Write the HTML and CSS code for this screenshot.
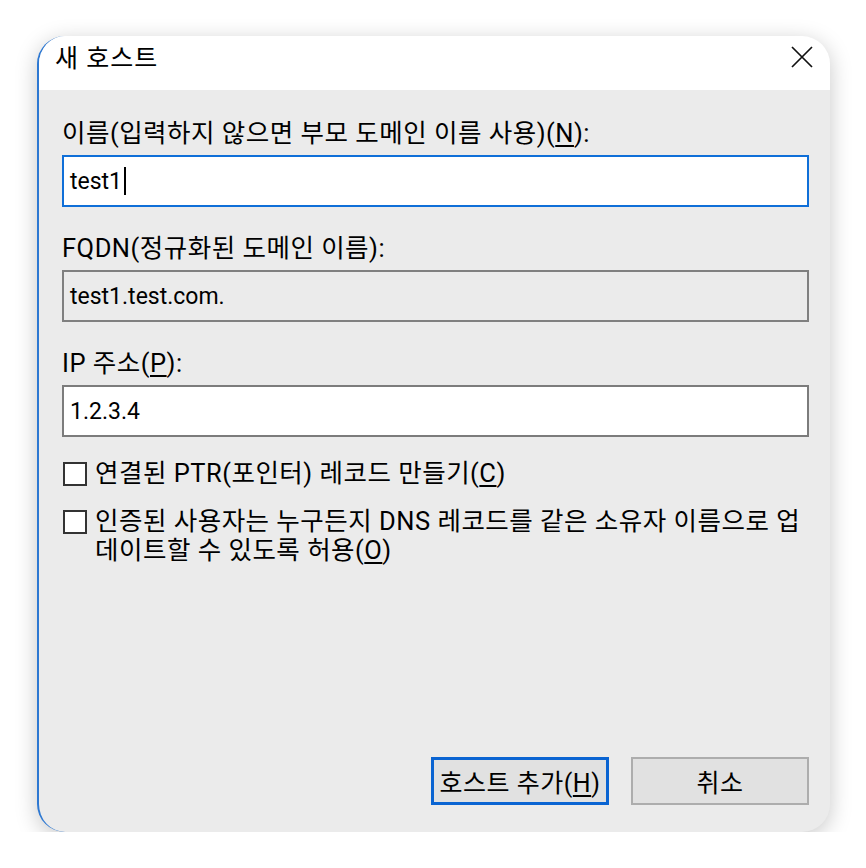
FILE: index.html
```html
<!DOCTYPE html>
<html lang="ko">

<head>
    <meta charset="UTF-8">
    <meta name="viewport" content="width=device-width, initial-scale=1.0">
    <title>새 호스트</title>
    <link rel="stylesheet" href="styles.css">
</head>

<body>

    <div class="dialog">
        <div class="titlebar">
            <span class="title">새 호스트</span>
            <button class="close" aria-label="닫기">
                <svg width="22" height="22" viewBox="0 0 22 22">
                    <path d="M1 1 L21 21 M21 1 L1 21" stroke="#111" stroke-width="1.7" fill="none" />
                </svg>
            </button>
        </div>

        <div class="content">
            <label class="label">이름(입력하지 않으면 부모 도메인 이름 사용)(<u>N</u>):</label>
            <div class="field field-focus">test1<span class="caret"></span></div>

            <label class="label">FQDN(정규화된 도메인 이름):</label>
            <div class="field field-readonly">test1.test.com.</div>

            <label class="label">IP 주소(<u>P</u>):</label>
            <div class="field">1.2.3.4</div>

            <div class="check first">
                <span class="box"></span>
                <span class="check-text">연결된 PTR(포인터) 레코드 만들기(<u>C</u>)</span>
            </div>
            <div class="check">
                <span class="box"></span>
                <span class="check-text">인증된 사용자는 누구든지 DNS 레코드를 같은 소유자 이름으로 업<br>데이트할 수 있도록 허용(<u>O</u>)</span>
            </div>

            <div class="actions">
                <button class="btn btn-default">호스트 추가(<u>H</u>)</button>
                <button class="btn">취소</button>
            </div>
        </div>
    </div>

</body>

</html>
```

FILE: styles.css
```css
body {
    margin: 0;
    background-color: #fff;
    font-family: 'Roboto', 'Noto Sans CJK KR', sans-serif;
    color: #000;
}

.dialog {
    box-sizing: border-box;
    width: 793px;
    height: 796px;
    margin: 36px 0 0 37px;
    border-left: 2px solid #2d78d2;
    border-radius: 28px;
    overflow: hidden;
    background-color: #ebebeb;
    box-shadow: 0 5px 22px rgba(0, 0, 0, 0.22);
    display: flex;
    flex-direction: column;
}

.titlebar {
    height: 54px;
    background-color: #fff;
    display: flex;
    justify-content: space-between;
    align-items: flex-start;
    padding: 0 17px 0 16px;
    box-sizing: border-box;
}

.title {
    font-size: 25px;
    line-height: 30px;
    letter-spacing: 1px;
    margin-top: 8px;
}

.close {
    border: none;
    background: none;
    padding: 0;
    margin-top: 10px;
    width: 22px;
    height: 22px;
}

.close svg {
    display: block;
}

.content {
    flex: 1;
    display: flex;
    flex-direction: column;
    padding: 28px 21px 27px 23px;
}

.label {
    font-size: 25.5px;
    line-height: 30px;
    letter-spacing: 0.5px;
    margin-bottom: 7px;
}

.label u,
.check-text u,
.btn u {
    text-underline-offset: 3px;
}

.field {
    box-sizing: border-box;
    height: 52px;
    border: 2px solid #7c7c7c;
    background-color: #fff;
    display: flex;
    align-items: center;
    padding: 0 6px;
    font-size: 23px;
    margin-bottom: 26px;
}

.field-focus {
    border-color: #0f6fd8;
}

.field-readonly {
    background-color: #ebebeb;
    border-color: #808080;
}

.caret {
    display: inline-block;
    width: 2px;
    height: 28px;
    margin-left: 2px;
    background-color: #000;
}

.check {
    display: flex;
    align-items: flex-start;
    padding-left: 1px;
}

.check.first {
    margin-top: -4px;
    margin-bottom: 19px;
}

.box {
    box-sizing: border-box;
    flex: none;
    width: 24px;
    height: 24px;
    margin-top: 3px;
    margin-right: 8px;
    border: 2px solid #333;
    background-color: #fff;
}

.check-text {
    font-size: 25.5px;
    line-height: 29px;
    letter-spacing: 0.5px;
}

.actions {
    margin-top: auto;
    display: flex;
    justify-content: flex-end;
    gap: 22px;
}

.btn {
    box-sizing: border-box;
    width: 178px;
    height: 48px;
    border: 2px solid #adadad;
    background-color: #e1e1e1;
    font-family: inherit;
    font-size: 25px;
    letter-spacing: 0.5px;
    color: #000;
    padding: 0;
}

.btn-default {
    border: 3px solid #0a64d2;
}
```
